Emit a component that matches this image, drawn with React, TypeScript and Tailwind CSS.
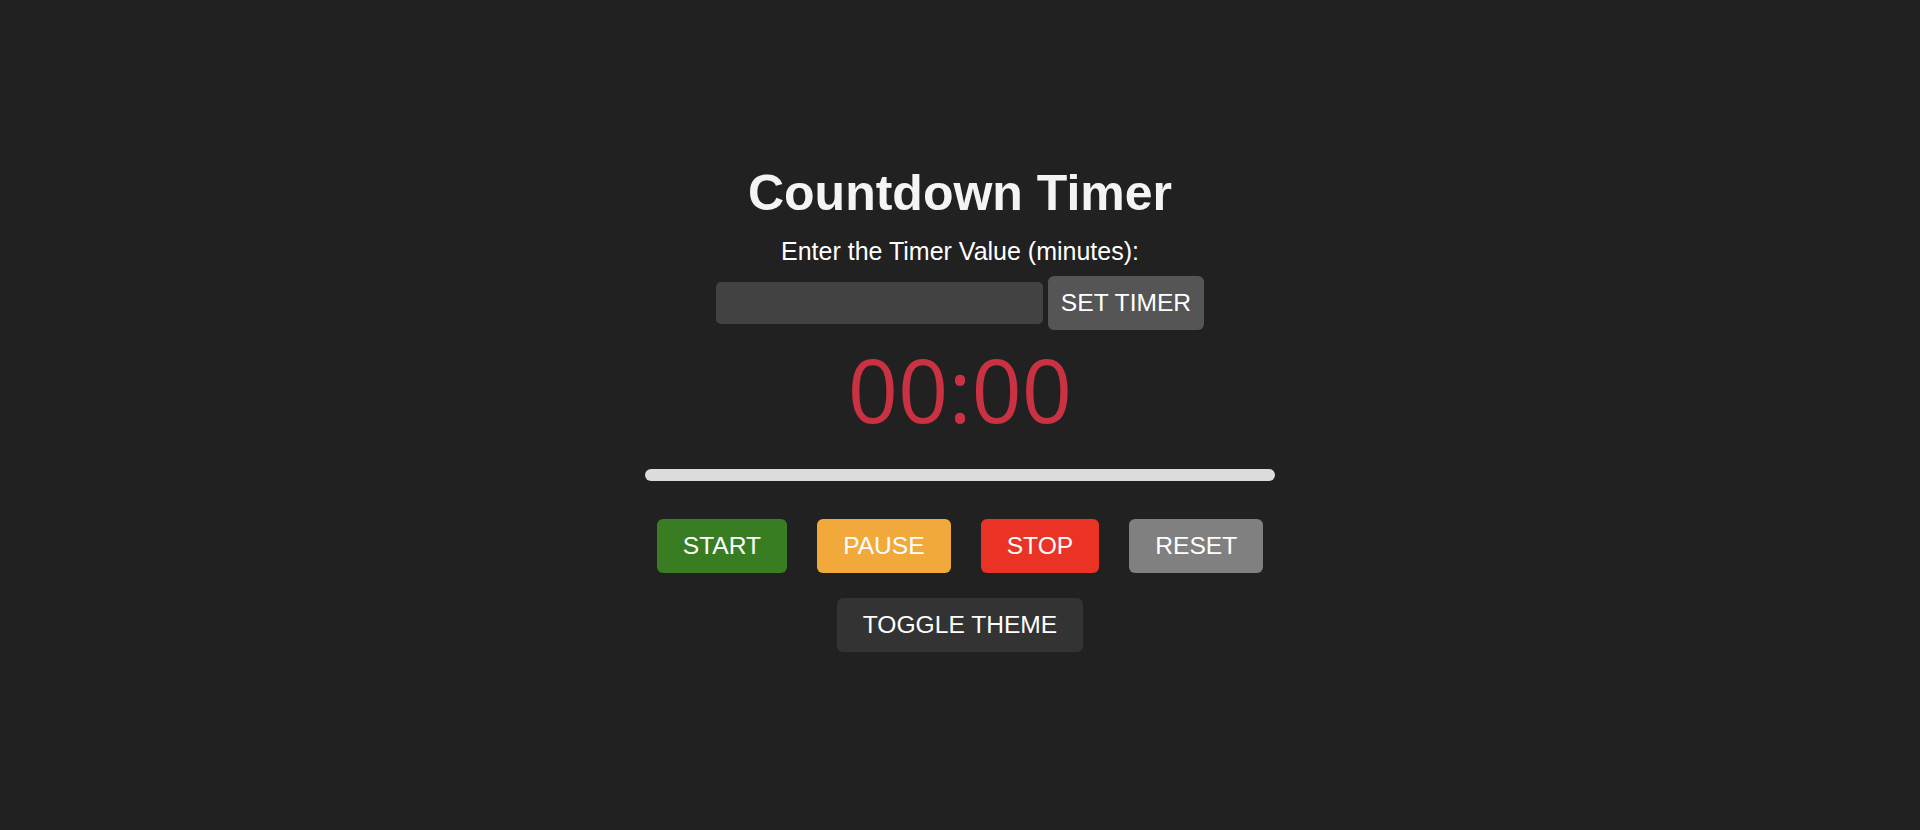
import React from 'react';

const actions = [
  { label: 'START', className: 'bg-[#387d22]' },
  { label: 'PAUSE', className: 'bg-[#f1a93c]' },
  { label: 'STOP', className: 'bg-[#ea3324]' },
  { label: 'RESET', className: 'bg-[#808080]' },
];

const App: React.FC = () => {
  return (
    <div className="min-h-[830px] w-full bg-[#212121] font-['Liberation_Sans',Arial,sans-serif]">
      <div className="flex flex-col items-center pt-[164px]">
        <h1 className="text-[50px] leading-[58px] font-bold text-[#f4f4f4]">
          Countdown Timer
        </h1>

        <label className="mt-[15px] text-[25px] leading-[28px] text-white">
          Enter the Timer Value (minutes):
        </label>

        <div className="mt-[11px] flex items-center gap-[5px]">
          <input
            type="number"
            className="h-[42px] w-[327px] rounded-[5px] bg-[#424242] px-3 text-[20px] text-white outline-none"
          />
          <button className="h-[54px] rounded-[6px] bg-[#555555] px-[13px] text-[24.6px] leading-[28px] text-white">
            SET TIMER
          </button>
        </div>

        <div className="mt-[9px] font-['Open_Sans','Noto_Sans',sans-serif] text-[88px] leading-[100px] text-[#ca3142]">
          00:00
        </div>

        <div className="mt-[30px] h-[12px] w-[630px] rounded-full bg-[#dcdcdc]" />

        <div className="mt-[38px] flex items-center gap-[30px]">
          {actions.map((action) => (
            <button
              key={action.label}
              className={`h-[54px] rounded-[6px] px-[26px] text-[24.6px] leading-[28px] text-white ${action.className}`}
            >
              {action.label}
            </button>
          ))}
        </div>

        <button className="mt-[25px] h-[54px] rounded-[6px] bg-[#333333] px-[26px] text-[24.6px] leading-[28px] text-white">
          TOGGLE THEME
        </button>
      </div>
    </div>
  );
};

export default App;
